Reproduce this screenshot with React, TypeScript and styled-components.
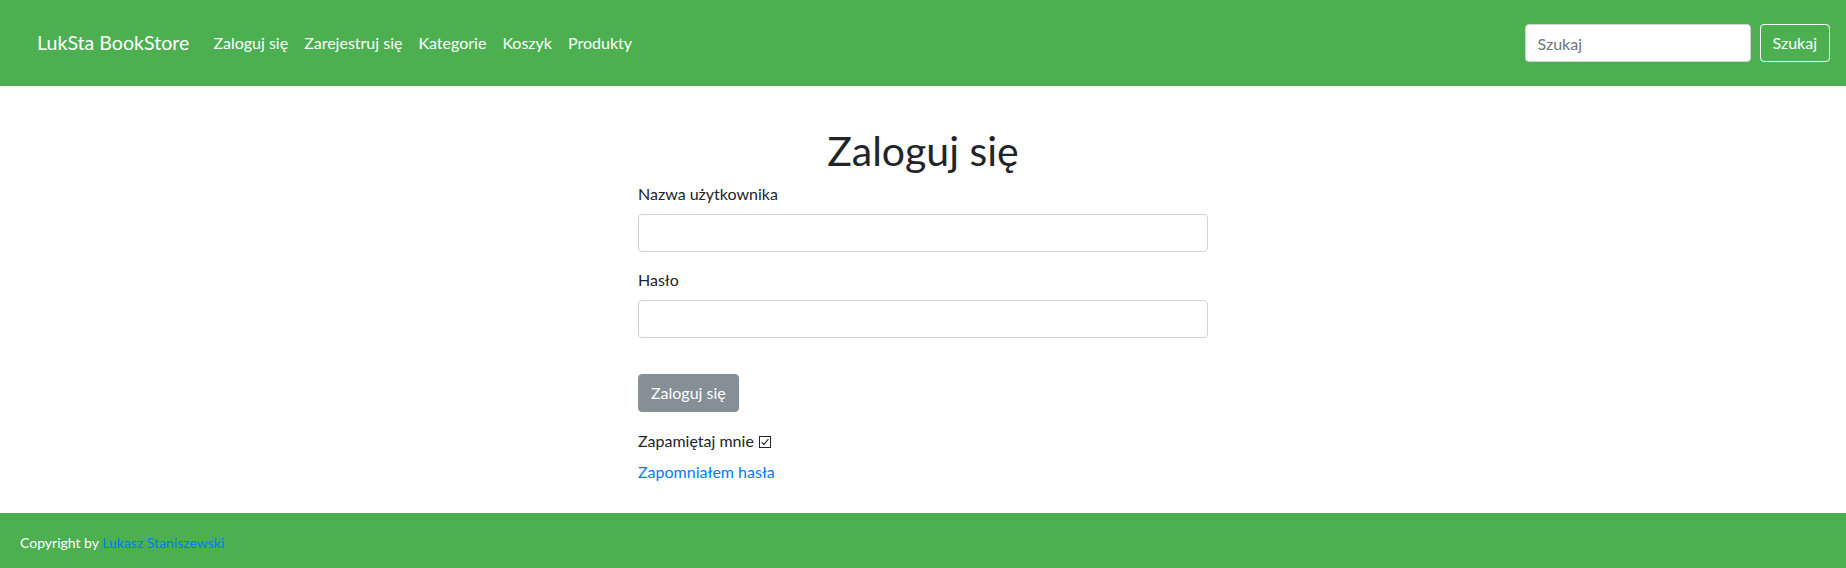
import React from "react";
import styled, { createGlobalStyle } from "styled-components";

const GlobalStyle = createGlobalStyle`
  html, body { margin: 0; padding: 0; background: #fff; }
  body {
    font-family: "Lato", "Noto Sans", "Liberation Sans", sans-serif;
    font-size: 16px;
    line-height: 1.5;
    color: #212529;
  }
  * { box-sizing: border-box; }
`;

const Page = styled.div`
  display: flex;
  flex-direction: column;
  min-height: 568px;
`;

const Navbar = styled.nav`
  display: flex;
  align-items: center;
  height: 86px;
  padding: 0 16px 0 37px;
  background: #4caf50;
`;

const Brand = styled.a`
  font-size: 19.6px;
  line-height: 30px;
  color: #fff;
  text-decoration: none;
  margin-right: 16px;
`;

const NavLinks = styled.ul`
  display: flex;
  list-style: none;
  margin: 0;
  padding: 0;
  flex: 1;
`;

const NavLink = styled.a`
  display: block;
  padding: 0 8px;
  color: #fff;
  font-size: 16px;
  line-height: 24px;
  text-decoration: none;
`;

const SearchForm = styled.form`
  display: flex;
  align-items: center;
  gap: 9px;
`;

const SearchInput = styled.input`
  width: 226px;
  height: 38px;
  padding: 6px 12px;
  border: 1px solid #ced4da;
  border-radius: 4px;
  font: inherit;
  color: #495057;
  &::placeholder { color: #6c757d; }
`;

const OutlineButton = styled.button`
  height: 38px;
  padding: 0 12px;
  border: 1px solid #fff;
  border-radius: 4px;
  background: transparent;
  color: #fff;
  font: inherit;
`;

const Main = styled.main`
  flex: 1;
`;

const Column = styled.div`
  margin: 0 auto;
  width: 570px;
  padding-top: 41px;
  padding-bottom: 29px;
`;

const Title = styled.h1`
  margin: 0 0 7px;
  text-align: center;
  font-size: 41px;
  font-weight: 400;
  line-height: 48px;
`;

const Field = styled.div<{ $gap: number }>`
  margin-bottom: ${(p) => p.$gap}px;
`;

const Label = styled.label`
  display: block;
  margin-bottom: 8px;
  line-height: 24px;
`;

const TextInput = styled.input`
  display: block;
  width: 100%;
  height: 38px;
  padding: 6px 12px;
  border: 1px solid #ced4da;
  border-radius: 4px;
  font: inherit;
`;

const SubmitButton = styled.button`
  display: block;
  height: 38px;
  padding: 0 12px;
  border: 1px solid #868e96;
  border-radius: 4px;
  background: #868e96;
  color: #fff;
  font: inherit;
  margin-bottom: 17px;
`;

const Remember = styled.div`
  display: flex;
  align-items: center;
  gap: 5px;
  line-height: 24px;
  margin-bottom: 7px;
`;

const CheckIcon = styled.svg`
  width: 12px;
  height: 12px;
  margin-top: 1px;
`;

const LinkLine = styled.div`
  line-height: 24px;
`;

const Link = styled.a`
  color: #007bff;
  text-decoration: none;
`;

const Footer = styled.footer`
  height: 55px;
  display: flex;
  align-items: center;
  padding: 4px 20px 0;
  background: #4caf50;
  color: #fff;
  font-size: 14px;
`;

export default function App() {
  return (
    <Page>
      <GlobalStyle />
      <Navbar>
        <Brand href="#">LukSta BookStore</Brand>
        <NavLinks>
          {["Zaloguj się", "Zarejestruj się", "Kategorie", "Koszyk", "Produkty"].map((l) => (
            <li key={l}>
              <NavLink href="#">{l}</NavLink>
            </li>
          ))}
        </NavLinks>
        <SearchForm onSubmit={(e) => e.preventDefault()}>
          <SearchInput placeholder="Szukaj" />
          <OutlineButton type="submit">Szukaj</OutlineButton>
        </SearchForm>
      </Navbar>
      <Main>
        <Column>
          <Title>Zaloguj się</Title>
          <Field $gap={16}>
            <Label>Nazwa użytkownika</Label>
            <TextInput type="text" />
          </Field>
          <Field $gap={36}>
            <Label>Hasło</Label>
            <TextInput type="password" />
          </Field>
          <SubmitButton type="submit">Zaloguj się</SubmitButton>
          <Remember>
            Zapamiętaj mnie
            <CheckIcon viewBox="0 0 12 12" aria-hidden="true">
              <rect x="0.5" y="0.5" width="11" height="11" fill="none" stroke="#212529" strokeWidth="1" />
              <path d="M2.6 6.2 L4.9 8.4 L9.4 3.2" fill="none" stroke="#212529" strokeWidth="1.1" />
            </CheckIcon>
          </Remember>
          <LinkLine>
            <Link href="#">Zapomniałem hasła</Link>
          </LinkLine>
        </Column>
      </Main>
      <Footer>
        Copyright by&nbsp;<Link href="#">Lukasz Staniszewski</Link>
      </Footer>
    </Page>
  );
}
